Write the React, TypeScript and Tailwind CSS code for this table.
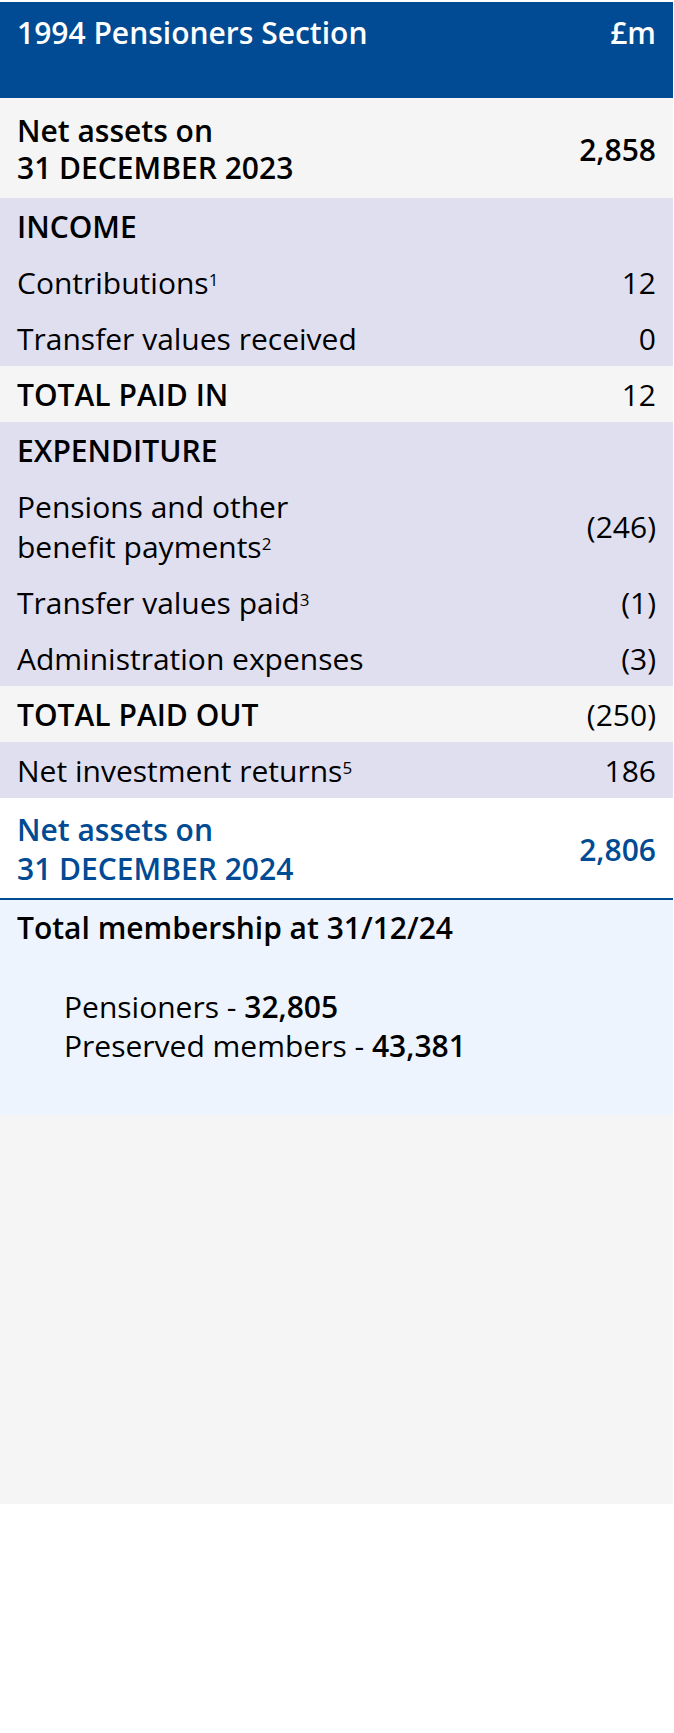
import React from 'react'

type Row = {
  label: React.ReactNode
  value?: string
  kind?: 'heading' | 'item' | 'total'
}

const income: Row[] = [
  { label: 'INCOME', kind: 'heading' },
  { label: <>Contributions<sup className="text-[17px]">1</sup></>, value: '12' },
  { label: 'Transfer values received', value: '0' },
]

const expenditure: Row[] = [
  { label: 'EXPENDITURE', kind: 'heading' },
  {
    label: (
      <>
        Pensions and other
        <br />
        benefit payments<sup className="text-[17px]">2</sup>
      </>
    ),
    value: '(246)',
  },
  { label: <>Transfer values paid<sup className="text-[17px]">3</sup></>, value: '(1)' },
  { label: 'Administration expenses', value: '(3)' },
]

function LineRow({ label, value, kind = 'item' }: Row) {
  return (
    <div className="flex items-center justify-between px-[17px] pt-[9px] pb-[7px] leading-[40px]">
      <div className={kind === 'item' ? 'font-normal' : 'font-semibold'}>{label}</div>
      {value ? <div className="text-right">{value}</div> : null}
    </div>
  )
}

export default function App() {
  return (
    <div className="w-[673px] pt-[2px] text-[30px] text-black" style={{ fontFamily: '"Open Sans", "Noto Sans", sans-serif' }}>
      {/* Header */}
      <div className="flex h-[96px] items-start justify-between bg-[#004b93] px-[17px] pt-[11px] leading-[40px] font-semibold text-white">
        <div>1994 Pensioners Section</div>
        <div>£m</div>
      </div>

      {/* Opening balance */}
      <div className="flex items-center justify-between bg-[#f5f5f5] px-[17px] pt-[14px] pb-[12px] leading-[37px] font-semibold">
        <div>
          Net assets on
          <br />
          31 DECEMBER 2023
        </div>
        <div>2,858</div>
      </div>

      <div className="bg-[#dfdff0]">
        {income.map((r, i) => (
          <LineRow key={i} {...r} />
        ))}
      </div>

      <div className="bg-[#f5f5f5]">
        <LineRow label="TOTAL PAID IN" value="12" kind="total" />
      </div>

      <div className="bg-[#dfdff0]">
        {expenditure.map((r, i) => (
          <LineRow key={i} {...r} />
        ))}
      </div>

      <div className="bg-[#f5f5f5]">
        <LineRow label="TOTAL PAID OUT" value="(250)" kind="total" />
      </div>

      <div className="bg-[#dfdff0]">
        <LineRow label={<>Net investment returns<sup className="text-[17px]">5</sup></>} value="186" />
      </div>

      {/* Closing balance */}
      <div className="flex items-center justify-between border-b-2 border-[#004b93] bg-white px-[17px] pt-[12px] pb-[10px] leading-[39px] font-semibold text-[#004b93]">
        <div>
          Net assets on
          <br />
          31 DECEMBER 2024
        </div>
        <div>2,806</div>
      </div>

      {/* Membership */}
      <div className="bg-[#edf4fd] px-[17px] pt-2 pb-[50px]">
        <div className="leading-[40px] font-semibold">Total membership at 31/12/24</div>
        <div className="mt-[39px] pl-[47px] leading-[39px]">
          <div>
            Pensioners - <span className="font-semibold">32,805</span>
          </div>
          <div>
            Preserved members - <span className="font-semibold">43,381</span>
          </div>
        </div>
      </div>

      <div className="h-[389px] bg-[#f5f5f5]" />
    </div>
  )
}
